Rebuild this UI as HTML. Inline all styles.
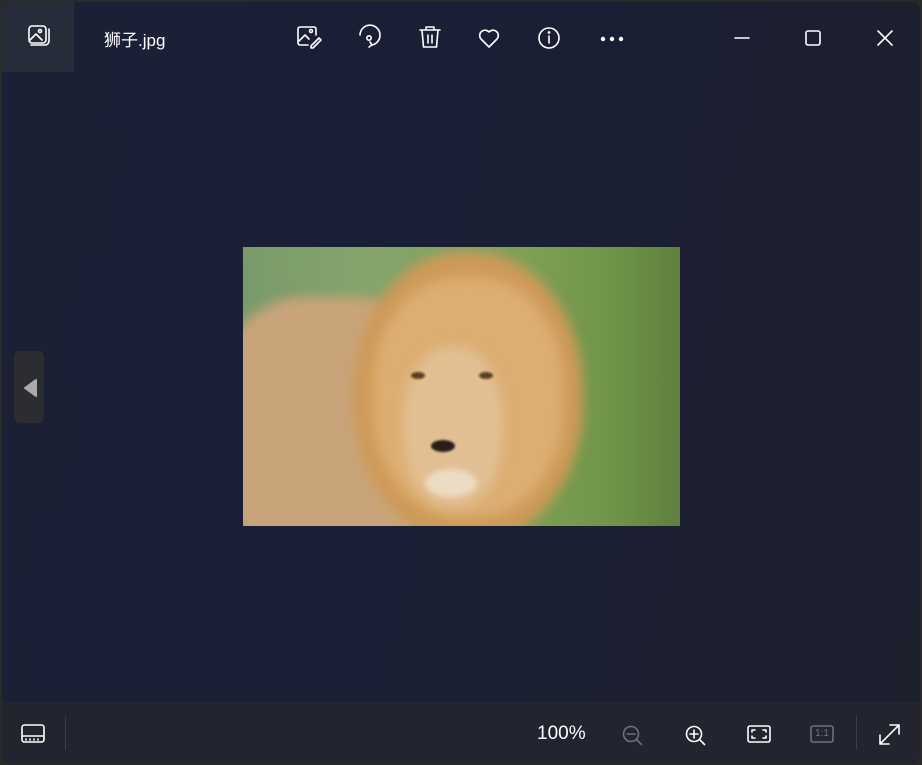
<!DOCTYPE html>
<html><head><meta charset="utf-8"><style>
*{margin:0;padding:0;box-sizing:border-box}
body{width:922px;height:765px;background:#2a2a2a;overflow:hidden;font-family:"Liberation Sans","Noto Sans CJK SC",sans-serif}
.win{position:absolute;left:2px;top:2px;width:918px;height:761px;border-radius:8px;overflow:hidden;background:linear-gradient(100deg,#1b2035 0%,#1a1f36 40%,#1c1f2c 100%)}
.bottom{position:absolute;left:0;top:700px;width:918px;height:61px;background:#22252f}
svg{position:absolute;overflow:visible}
.t{position:absolute;color:#fff}
.b{position:absolute;filter:blur(6px)}
</style></head><body>
<div class="win">
<div style="position:absolute;left:0;top:0;width:72px;height:70px;background:#272c3b"></div>
<svg width="918" height="70" fill="none" stroke="#fff" stroke-width="1.6" stroke-linecap="round" stroke-linejoin="round">
 <rect x="27" y="24" width="17" height="17" rx="3"/>
 <path d="M29 43h14a4 4 0 0 0 4-4V27"/>
 <path d="M28 38l6-6 6 6"/><circle cx="38" cy="29" r="1.5"/>
 <path d="M306 43h-8a2 2 0 0 1-2-2V27a2 2 0 0 1 2-2h14a2 2 0 0 1 2 2v6"/>
 <path d="M297 39l6-6 4 4"/><circle cx="309" cy="29" r="1.5"/>
 <path d="M309 44l8-8 2 2-8 8h-2z"/>
 <path d="M358 33a10 10 0 1 1 12 10"/><path d="M368 40l2 3-3 2"/><circle cx="367" cy="36" r="2.2"/>
 <path d="M418 28h20M424 28v-3h8v3M420 28l1.5 17h13l1.5-17M426 33v8M430 33v8"/>
 <path d="M487 45l-8-8a5 5 0 0 1 8-7 5 5 0 0 1 8 7z"/>
 <circle cx="547" cy="36" r="10"/><path d="M547 34v7"/><circle cx="547" cy="30.5" r=".6" fill="#fff"/>
 <path d="M733 36h14"/><rect x="804" y="29" width="14" height="14" rx="2"/>
 <path d="M876 29l14 14M890 29l-14 14"/>
</svg>
<svg width="918" height="70"><circle cx="601" cy="37" r="2.2" fill="#fff"/><circle cx="610" cy="37" r="2.2" fill="#fff"/><circle cx="619" cy="37" r="2.2" fill="#fff"/></svg>
<div class="t" style="left:102px;top:24px;font-size:17px">狮子.jpg</div>

<div style="position:absolute;left:241px;top:245px;width:437px;height:279px;overflow:hidden;background:linear-gradient(90deg,#7a9a6a 0%,#86a56c 30%,#7ea056 65%,#6f9448 85%,#5f7f3e 100%)">
 <div class="b" style="left:-30px;top:50px;width:230px;height:260px;border-radius:40%;background:#c9a47a"></div>
 <div class="b" style="left:110px;top:5px;width:230px;height:290px;border-radius:48%;background:#cf9a58"></div>
 <div class="b" style="left:130px;top:30px;width:190px;height:240px;border-radius:45%;background:#dcae72"></div>
 <div class="b" style="left:160px;top:100px;width:100px;height:160px;border-radius:45%;background:#e2bf93"></div>
 <div style="position:absolute;left:188px;top:193px;width:24px;height:12px;border-radius:50%;background:#2a1e1a;filter:blur(1px)"></div>
 <div style="position:absolute;left:168px;top:125px;width:14px;height:7px;border-radius:50%;background:#5a4020;filter:blur(1px)"></div>
 <div style="position:absolute;left:236px;top:125px;width:14px;height:7px;border-radius:50%;background:#5a4020;filter:blur(1px)"></div>
 <div style="position:absolute;left:182px;top:222px;width:52px;height:28px;border-radius:50%;background:#ecdcc4;filter:blur(3px)"></div>
</div>

<div style="position:absolute;left:12px;top:349px;width:30px;height:72px;border-radius:6px;background:#2b2d33"></div>
<svg width="60" height="430"><path d="M23 386l11-8v16z" fill="#aaa" stroke="#aaa" stroke-width="2" stroke-linejoin="round"/></svg>

<div class="bottom"></div>
<div style="position:absolute;left:63px;top:714px;width:1px;height:34px;background:#3c3f48"></div>
<div style="position:absolute;left:854px;top:714px;width:1px;height:34px;background:#3c3f48"></div>
<div class="t" style="left:535px;top:721px;font-size:19px">100%</div>
<svg width="918" height="761" fill="none" stroke-width="1.6" stroke-linecap="round" stroke-linejoin="round">
 <g stroke="#fff"><rect x="20" y="723" width="22" height="17" rx="2.5"/><path d="M20 734h22M24 737v1M28 737v1M32 737v1M36 737v1"/></g>
 <g stroke="#6f7178"><circle cx="629" cy="732" r="7.5"/><path d="M625 732h8M634.5 737.5l5 5"/></g>
 <g stroke="#fff"><circle cx="692" cy="732" r="7.5"/><path d="M688 732h8M692 728v8M697.5 737.5l5 5"/>
 <rect x="746" y="724" width="22" height="16" rx="2"/><path d="M750 730v-2h3M764 730v-2h-3M750 734v2h3M764 734v2h-3"/></g>
 <g stroke="#6f7178"><rect x="809" y="724" width="22" height="16" rx="2"/></g>
 <g stroke="#fff"><path d="M878 742l19-19M888 723h9v9M878 733v9h9"/></g>
</svg>
<div style="position:absolute;left:809px;top:724px;width:22px;height:16px;color:#6f7178;font-size:10px;text-align:center;line-height:16px">1:1</div>
</div>
</body></html>
